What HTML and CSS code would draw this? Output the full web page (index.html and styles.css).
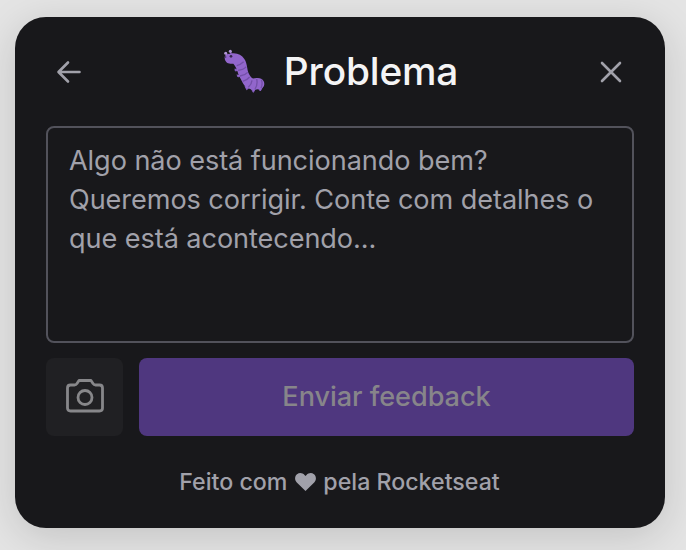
FILE: index.html
```html
<!DOCTYPE html>
<html lang="pt-BR">
<head>
<meta charset="utf-8">
<title>Feedback</title>
<link rel="stylesheet" href="styles.css">
</head>
<body>
<main class="card">
  <header class="header">
    <button class="icon-button" aria-label="Voltar">
      <svg class="arrow" viewBox="0 0 26 24"><path d="M23.500 12H3M12 2.500L2.500 12L12 21.500"/></svg>
    </button>
    <h1 class="title">
      <svg class="bug" viewBox="25 22 129 132">
        <path class="horn" d="M38 42L33 33M50 39L47 29"/>
        <path class="feet" d="M61 81L62 88L74 85M67 99L70 106L81 100M91 133L96 144L104 137M109 140L116 152L123 140M130 139L137 148L143 137"/>
        <path class="body" d="M30 48C29 40 36 36 47 36C66 32 80 39 89 52C99 66 96 84 103 97C108 106 112 112 121 110C131 107 142 109 147 119C153 132 144 143 130 143C106 146 92 138 84 123C78 111 71 101 68 88C65 79 61 72 56 66C44 67 31 65 30 48Z"/>
        <path class="stripes" d="M66 72Q77 69 87 60M70 86Q86 85 95 75M76 103Q91 101 99 92M84 119Q99 114 105 106M101 137Q111 128 112 116M121 142Q130 128 126 112M139 139Q145 127 140 114"/>
        <circle class="eye" cx="49" cy="44" r="4"/>
        <circle class="eye" cx="33" cy="46" r="2"/>
        <circle class="antenna" cx="33" cy="35" r="4.500"/>
        <circle class="antenna" cx="47" cy="29" r="4.500"/>
      </svg>
      <span>Problema</span>
    </h1>
    <button class="icon-button" aria-label="Fechar">
      <svg class="close" viewBox="0 0 22 22"><path d="M2 2L20 20M20 2L2 20"/></svg>
    </button>
  </header>
  <div class="field">Algo não está funcionando bem?<br>Queremos corrigir. Conte com detalhes o<br>que está acontecendo...</div>
  <div class="actions">
    <button class="camera-button" aria-label="Capturar tela">
      <svg class="camera" viewBox="0 0 38 34"><path d="M4.500 6H8.500Q10 6 11 4.500L13 1.500H25L27 4.500Q28 6 29.500 6H33.500Q36.500 6 36.500 9V29Q36.500 32 33.500 32H4.500Q1.500 32 1.500 29V9Q1.500 6 4.500 6Z"/><circle cx="19" cy="18.500" r="7"/></svg>
    </button>
    <button class="submit">Enviar feedback</button>
  </div>
  <footer class="footer">
    <span>Feito com</span>
    <svg class="heart" viewBox="0 0 21 18"><path d="M10.500 18L1.800 9.400C-.6 7 -.4 3.300 2 1.300C4.400-.7 7.500-.2 9.500 2L10.500 3L11.500 2C13.500-.2 16.600-.7 19 1.300C21.400 3.300 21.600 7 19.200 9.400Z"/></svg>
    <span>pela Rocketseat</span>
  </footer>
</main>
</body>
</html>
```

FILE: styles.css
```css
* { box-sizing: border-box; }
body {
  margin: 0;
  height: 550px;
  overflow: hidden;
  padding: 17px 21px 22px 15px;
  background: #e4e4e4;
  font-family: Inter, "Liberation Sans", sans-serif;
}
button { border: 0; padding: 0; font: inherit; background: none; }
svg { display: block; flex: none; }
.card {
  width: 650px;
  height: 511px;
  padding: 31px;
  border-radius: 31px;
  background: #18181b;
  box-shadow: 0 8px 40px rgba(0, 0, 0, .15);
}
.header {
  display: flex;
  align-items: center;
  justify-content: space-between;
  height: 47px;
}
.icon-button {
  display: flex;
  align-items: center;
  justify-content: center;
  width: 46px;
  height: 46px;
}
.icon-button svg {
  fill: none;
  stroke: #a1a1aa;
  stroke-width: 2.6;
  stroke-linecap: round;
  stroke-linejoin: round;
}
.arrow { width: 26px; height: 24px; }
.close { width: 22px; height: 22px; }
.title {
  display: flex;
  align-items: center;
  gap: 18px;
  margin: 0 0 1px;
  padding-left: 1px;
  color: #f4f4f5;
  font-size: 38.8px;
  line-height: 46px;
  font-weight: 500;
  letter-spacing: -.15px;
}
.bug { width: 43px; height: 44px; }
.body { fill: #9266cc; }
.stripes, .horn, .feet { fill: none; stroke: #7450a8; stroke-width: 4; }
.feet { fill: #9266cc; stroke: #8860c4; stroke-width: 3; }
.horn { stroke: #9266cc; }
.eye { fill: #34264a; }
.antenna { fill: #b296d8; }
.field {
  height: 217px;
  margin-top: 31px;
  padding: 14px 21px;
  border: 2px solid #52525b;
  border-radius: 8px;
  color: #a1a1aa;
  font-size: 27.1px;
  font-weight: 400;
  letter-spacing: -.07px;
  line-height: 38.8px;
  white-space: nowrap;
}
.actions { display: flex; gap: 16px; margin-top: 15px; height: 77.5px; }
.camera-button {
  display: flex;
  align-items: center;
  justify-content: center;
  width: 77px;
  padding-bottom: 1px;
  border-radius: 8px;
  background: #202023;
}
.camera {
  width: 38px;
  height: 34px;
  fill: none;
  stroke: #87878a;
  stroke-width: 2.8;
  stroke-linejoin: round;
}
.submit {
  flex: 1;
  border-radius: 8px;
  background: #4f377f;
  color: #87858a;
  font-size: 27.1px;
  font-weight: 500;
  letter-spacing: -.05px;
}
.footer {
  display: flex;
  align-items: center;
  justify-content: center;
  gap: 7.5px;
  margin-top: 31px;
  padding-right: 1px;
  color: #a1a1aa;
  font-size: 23.2px;
  font-weight: 500;
  line-height: 31px;
}
.heart { width: 21px; height: 18px; fill: #a1a1aa; }
```
